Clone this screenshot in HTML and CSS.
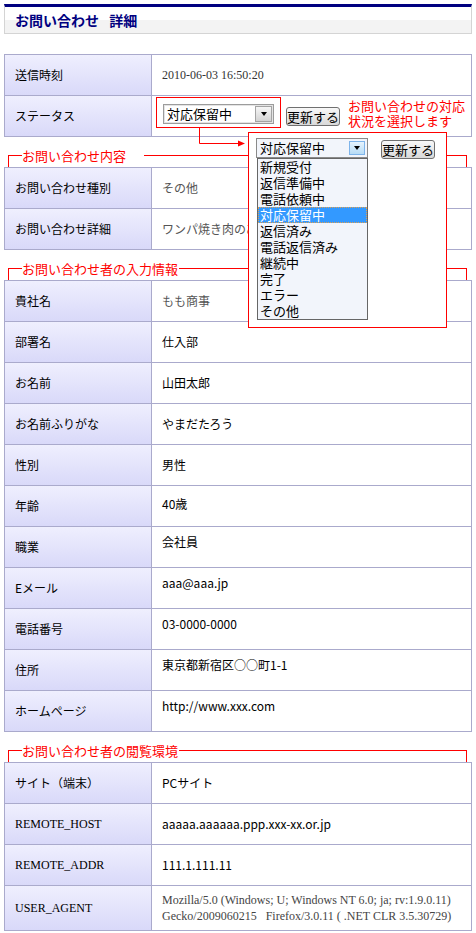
FILE: index.html
```html
<!DOCTYPE html>
<html lang="ja">
<head>
<meta charset="utf-8">
<title>お問い合わせ 詳細</title>
<link rel="stylesheet" href="styles.css">
</head>
<body>
<div class="page">
  <div class="header"><h1 class="title">お問い合わせ 詳細</h1></div>

  <table class="detail first">
    <tr><th>送信時刻</th><td class="serif">2010-06-03 16:50:20</td></tr>
    <tr><th>ステータス</th><td class="status-cell">
      <div class="status">
        <div class="select-frame">
          <div class="select"><span class="select-text">対応保留中</span><span class="select-btn"><span class="tri"></span></span></div>
        </div>
        <button class="btn btn-status" type="button">更新する</button>
        <p class="note">お問い合わせの対応<br>状況を選択します</p>
      </div>
    </td></tr>
  </table>

  <div class="sec sec-gap"><span class="sec-label">お問い合わせ内容</span></div>
  <table class="detail">
    <tr><th>お問い合わせ種別</th><td class="gray">その他</td></tr>
    <tr><th>お問い合わせ詳細</th><td class="gray">ワンパ焼き肉のあり方について</td></tr>
  </table>

  <div class="sec"><span class="sec-label">お問い合わせ者の入力情報</span></div>
  <table class="detail">
    <tr><th>貴社名</th><td class="gray">もも商事</td></tr>
    <tr><th>部署名</th><td>仕入部</td></tr>
    <tr><th>お名前</th><td>山田太郎</td></tr>
    <tr><th>お名前ふりがな</th><td>やまだたろう</td></tr>
    <tr><th>性別</th><td>男性</td></tr>
    <tr><th>年齢</th><td class="raise">40歳</td></tr>
    <tr><th>職業</th><td class="top">会社員</td></tr>
    <tr><th>Eメール</th><td class="top">aaa@aaa.jp</td></tr>
    <tr><th>電話番号</th><td class="top">03-0000-0000</td></tr>
    <tr><th>住所</th><td class="top">東京都新宿区○○町1-1</td></tr>
    <tr><th>ホームページ</th><td class="top">http://www.xxx.com</td></tr>
  </table>

  <div class="sec"><span class="sec-label">お問い合わせ者の閲覧環境</span></div>
  <table class="detail">
    <tr><th>サイト（端末）</th><td>PCサイト</td></tr>
    <tr><th class="serif-label">REMOTE_HOST</th><td>aaaaa.aaaaaa.ppp.xxx-xx.or.jp</td></tr>
    <tr><th class="serif-label">REMOTE_ADDR</th><td>111.1.111.11</td></tr>
    <tr><th class="serif-label">USER_AGENT</th><td class="serif ua">Mozilla/5.0 (Windows; U; Windows NT 6.0; ja; rv:1.9.0.11)<br>Gecko/2009060215&nbsp;&nbsp; Firefox/3.0.11 ( .NET CLR 3.5.30729)</td></tr>
  </table>

  <svg class="arrow" width="56" height="26" viewBox="0 0 56 26" aria-hidden="true">
    <polyline points="5.5,2 5.5,17.5 46,17.5" fill="none" stroke="#f00" stroke-width="1"/>
    <polygon points="44,14.5 51,17.5 44,20.5" fill="#f00"/>
  </svg>

  <div class="popup">
    <div class="popup-row">
      <div class="select select-focus"><span class="select-text">対応保留中</span><span class="select-btn select-btn-focus"><span class="tri"></span></span></div>
      <button class="btn btn-popup" type="button">更新する</button>
    </div>
    <ul class="list">
      <li>新規受付</li>
      <li>返信準備中</li>
      <li>電話依頼中</li>
      <li class="sel">対応保留中</li>
      <li>返信済み</li>
      <li>電話返信済み</li>
      <li>継続中</li>
      <li>完了</li>
      <li>エラー</li>
      <li>その他</li>
    </ul>
  </div>
</div>
</body>
</html>
```

FILE: styles.css
```css
* { box-sizing: border-box; }
html, body { margin: 0; padding: 0; background: #fff; }
body {
  font-family: "Noto Sans CJK JP", "Noto Sans", sans-serif;
  font-size: 12px;
  color: #000;
}
.page {
  position: relative;
  width: 476px;
  padding: 4px 4px 0 4px;
}
.header {
  height: 30px;
  border: 1px solid #d4d4d4;
  border-top: 3px solid #000080;
  background: linear-gradient(#fff 0, #fff 50%, #f3f3f3 50%, #f3f3f3 100%);
  padding-left: 10px;
  display: flex;
  align-items: center;
}
.title {
  margin: 0;
  font-size: 14px;
  line-height: 16px;
  font-weight: bold;
  color: #000080;
  word-spacing: 7px;
}

.detail {
  width: 468px;
  table-layout: fixed;
  border-collapse: separate;
  border-spacing: 0;
  border-top: 1px solid #aaaacc;
  border-left: 1px solid #aaaacc;
}
.detail.first { margin-top: 20px; }
.detail th,
.detail td {
  height: 41px;
  padding: 0 10px;
  border-right: 1px solid #aaaacc;
  border-bottom: 1px solid #aaaacc;
  text-align: left;
  font-weight: normal;
  vertical-align: middle;
  line-height: 16px;
  white-space: nowrap;
}
.detail th {
  width: 147px;
  background: linear-gradient(#efeffe, #d9d9f9);
}
.detail td.serif {
  font-family: "Liberation Serif", serif;
  color: #333;
}
.detail th.serif-label {
  font-family: "Liberation Serif", serif;
}
.detail td.gray { color: #555; }
.detail td.raise { padding-bottom: 4px; }
.detail td.top {
  vertical-align: top;
  padding-top: 7px;
}
.detail td.ua {
  color: #444;
  padding-top: 6px;
  padding-bottom: 6px;
}

.status-cell.status-cell { padding: 1px 4px 0; vertical-align: top; }
.status { display: flex; align-items: flex-start; }
.select-frame {
  border: 1px solid #f00;
  padding: 6px 6px 3px;
}
.select {
  display: flex;
  width: 111px;
  height: 20px;
  border: 1px solid #9c9c9c;
  background: #fff;
  box-shadow: inset 0 0 0 1px #e4e4e4;
}
.select-text {
  flex: 1;
  font-size: 13px;
  line-height: 18px;
  padding-left: 3px;
  white-space: nowrap;
}
.select-btn {
  width: 17px;
  margin: 1px;
  border: 1px solid #a4a4a4;
  background: linear-gradient(#f6f6f6, #d3d3d3);
  display: flex;
  align-items: center;
  justify-content: center;
}
.tri {
  width: 0;
  height: 0;
  border-left: 3px solid transparent;
  border-right: 3px solid transparent;
  border-top: 4px solid #000;
}
.btn {
  height: 19px;
  padding: 0;
  width: 54px;
  font-family: "Noto Sans CJK JP", sans-serif;
  font-size: 13px;
  line-height: 16px;
  color: #000;
  border: 1px solid #707070;
  border-radius: 3px;
  background: linear-gradient(#f8f8f8, #d9d9d9);
}
.btn-status { margin: 10px 0 0 5px; flex-shrink: 0; }
.note {
  margin: 1px 0 0 8px;
  color: #f00;
  font-size: 13px;
  line-height: 15px;
  white-space: nowrap;
}

.sec {
  display: flex;
  margin: 11px 0 0 4px;
  width: 459px;
  height: 19px;
  color: #f00;
  font-size: 13px;
  line-height: 15px;
}
.sec::before {
  content: "";
  flex: 0 0 13px;
  height: 11px;
  margin-top: 7px;
  border-top: 1px solid #f00;
  border-left: 1px solid #f00;
}
.sec::after {
  content: "";
  flex: 1;
  height: 11px;
  margin-top: 7px;
  margin-left: 1px;
  border-top: 1px solid #f00;
  border-right: 1px solid #f00;
}
.sec-gap::after { margin-left: 18px; }
.sec-label { white-space: nowrap; }

.arrow {
  position: absolute;
  left: 194px;
  top: 126px;
}

.popup {
  position: absolute;
  left: 248px;
  top: 132px;
  width: 199px;
  height: 196px;
  border: 1px solid #f00;
  background: #fff;
  padding: 5px 0 0 7px;
}
.popup-row { display: flex; align-items: flex-start; }
.select.select-focus {
  width: 112px;
  border-color: #8a8a8a;
  background: #f2f5fb;
  box-shadow: none;
}
.select-btn.select-btn-focus {
  width: 16px;
  margin: 2px 2px 2px 0;
  border-color: #7eb4ea;
  background: linear-gradient(#e6f3fd, #b7dcf6);
}
.btn-popup { margin: 2px 0 0 13px; }
.list {
  list-style: none;
  margin: -1px 0 0 1px;
  padding: 0;
  width: 111px;
  border: 1px solid #666;
  background: #f2f5fb;
}
.list li {
  height: 16px;
  font-size: 13px;
  line-height: 16px;
  padding-left: 2px;
  white-space: nowrap;
}
.list li.sel {
  background: #3399ff;
  color: #fff;
  outline: 1px dotted #e0a050;
  outline-offset: -1px;
}
```
